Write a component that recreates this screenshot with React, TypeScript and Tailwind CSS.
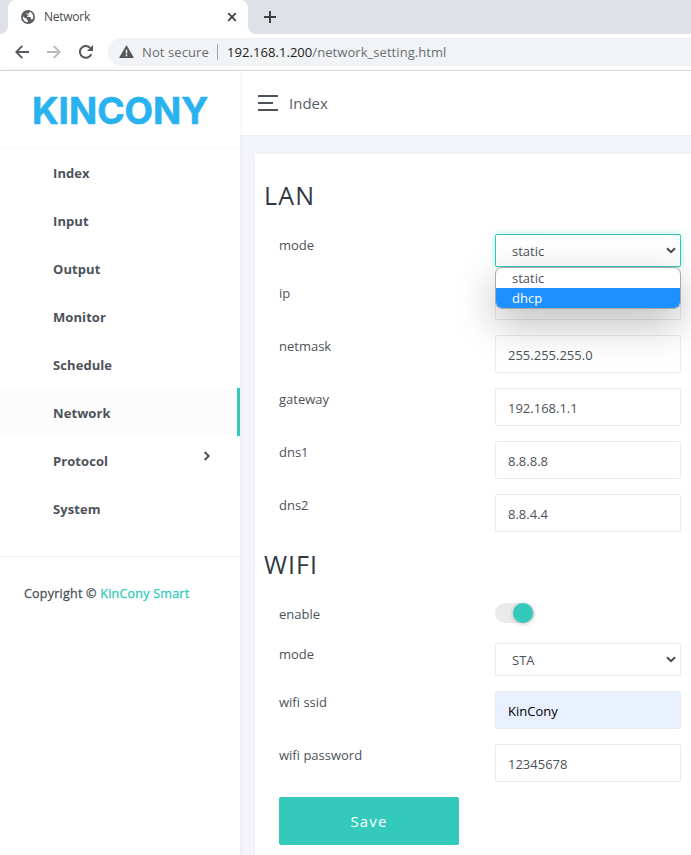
import React from 'react';

const NAV = ['Index', 'Input', 'Output', 'Monitor', 'Schedule', 'Network', 'Protocol', 'System'];

function Globe() {
  return (
    <svg className="h-[14px] w-[14px]" viewBox="0 0 14 14">
      <circle cx="7" cy="7" r="7" fill="#5a5e63" />
      <path d="M2 6.3 L4.1 8.2 H5.7 V9.6 L6.8 10.4 V12.3 C3.8 12.2 1.3 9.7 2 6.3Z" fill="#fff" />
      <path d="M8.3 1.8 C10.6 2.2 12.3 4.3 12.3 6.7 L11.9 8.7 L10.8 9.5 L9.6 8.4 V7.1 H6.3 V5.7 H7.6 V4.4 H5.4 V3.4 H8.3Z" fill="#fff" />
    </svg>
  );
}

function Chevron() {
  return (
    <svg className="h-[7px] w-[10px] shrink-0" viewBox="0 0 10 7" fill="none" stroke="#4b4b4b" strokeWidth="2">
      <path d="M1 1.2 L5 5.2 L9 1.2" />
    </svg>
  );
}

function BrowserBar() {
  return (
    <div className="h-[71px] shrink-0 border-b border-[#d5d7da] bg-white">
      <div className="flex h-[34px] bg-white">
        <div className="w-2 rounded-br-lg bg-[#dee1e6]" />
        <div className="bg-[#dee1e6]">
          <div className="flex h-[34px] w-[240px] items-center rounded-t-lg bg-white pr-[11px] pl-[13px]">
            <Globe />
            <span className="ml-[9px] flex-1 text-[12px] tracking-[-0.25px] text-[#45494d]">Network</span>
            <svg className="h-[10px] w-[10px]" viewBox="0 0 10 10" stroke="#3c4043" strokeWidth="1.7">
              <path d="M1.2 1.2 L8.8 8.8 M8.8 1.2 L1.2 8.8" />
            </svg>
          </div>
        </div>
        <div className="flex flex-1 items-center rounded-bl-lg bg-[#dee1e6] pl-4">
          <svg className="h-3 w-3" viewBox="0 0 12 12" stroke="#3c4043" strokeWidth="2">
            <path d="M6 0 V12 M0 6 H12" />
          </svg>
        </div>
      </div>
      <div className="flex h-9 items-center pl-[15px]">
        <svg className="h-[14px] w-[14px]" viewBox="0 0 14 14" fill="none" stroke="#54585d" strokeWidth="1.8">
          <path d="M14 7 H1.5 M7.3 0.8 L1.2 7 L7.3 13.2" />
        </svg>
        <svg className="ml-[18px] h-[14px] w-[14px]" viewBox="0 0 14 14" fill="none" stroke="#b8babd" strokeWidth="1.8">
          <path d="M0 7 H12.5 M6.7 0.8 L12.8 7 L6.7 13.2" />
        </svg>
        <svg className="ml-[18px] h-[14px] w-[14px]" viewBox="0 0 14 14">
          <path d="M12.3 9.1 A5.9 5.9 0 1 1 11.3 3" fill="none" stroke="#54585d" strokeWidth="2" />
          <path d="M14 0 V6 H8Z" fill="#54585d" />
        </svg>
        <div className="ml-[15px] flex h-7 flex-1 items-center rounded-l-full bg-[#f1f3f4] pl-[11px]">
          <svg className="mb-px h-[13px] w-[15px]" viewBox="0 0 15 13">
            <path d="M7.5 0 L15 13 H0Z" fill="#54585d" />
            <path d="M7.5 4.7 V8.5 M7.5 9.5 V11.2" stroke="#fff" strokeWidth="1.5" />
          </svg>
          <span className="ml-2 w-[75px] pt-px text-[13px] tracking-[0.1px] whitespace-nowrap text-[#6a6e73]">Not secure</span>
          <div className="mr-[9px] h-4 w-px bg-[#a5a8ac]" />
          <span className="pt-px text-[13px] tracking-[0.06px] whitespace-nowrap text-[#6a6e73]">
            <span className="text-[#202124]">192.168.1.200</span>/network_setting.html
          </span>
        </div>
      </div>
    </div>
  );
}

function Sidebar() {
  return (
    <aside className="z-10 w-[240px] shrink-0 bg-white shadow-[0_0_5px_rgba(60,70,100,0.09)]">
      <div className="flex h-[77px] items-center pl-[32px]">
        <div className="mt-[2px] font-['Inter'] text-[37px] leading-none font-bold text-[#29b2f0] [-webkit-text-stroke:0.6px_#29b2f0]">KINCONY</div>
      </div>
      <nav className="h-[409px] border-b border-[#f4f5f6] text-[13px] font-bold text-[#4d5259] shadow-[inset_0_1px_0_#f8f8f9]">
        {NAV.map((name) => (
          <div
            key={name}
            className={
              name === 'Network'
                ? 'flex h-12 items-center justify-between border-r-[3px] border-[#33cabb] bg-[#fcfcfc] pl-[53px]'
                : 'flex h-12 items-center justify-between pl-[53px]'
            }
          >
            <span className="pt-[3px] tracking-[0.08px]">{name}</span>
            {name === 'Protocol' && (
              <svg className="mr-[29px] mb-[9px] h-[10px] w-[8px]" viewBox="0 0 8 10" fill="none" stroke="#4d5259" strokeWidth="1.9">
                <path d="M1.6 1 L5.7 5 L1.6 9" />
              </svg>
            )}
          </div>
        ))}
      </nav>
      <div className="mt-[27px] pl-6 text-[12.5px] leading-5 tracking-[0.24px] whitespace-nowrap text-[#4d5259] [-webkit-text-stroke:0.3px]">
        Copyright © <span className="text-[#33cabb]">KinCony Smart</span>
      </div>
    </aside>
  );
}

function Row({ label, children }: { label: string; children: React.ReactNode }) {
  return (
    <div className="mb-[15px] flex items-start">
      <div className="w-[216px] pt-px leading-[20px]">{label}</div>
      {children}
    </div>
  );
}

function Field({ value, filled }: { value: string; filled?: boolean }) {
  return (
    <div
      className={
        filled
          ? 'flex h-[38px] w-[186px] items-center rounded-[2px] border border-[#ebebeb] bg-[#e8f0fe] pt-[3px] pl-3 text-black'
          : 'flex h-[38px] w-[186px] items-center rounded-[2px] border border-[#ebebeb] pt-[3px] pl-3'
      }
    >
      {value}
    </div>
  );
}

function Select({ value, open }: { value: string; open?: boolean }) {
  return (
    <div
      className={
        open
          ? 'relative flex h-[33px] w-[186px] items-center justify-between rounded-[2px] border border-[#33cabb] pr-1 pl-4 shadow-[0_0_6px_rgba(51,202,187,0.4)]'
          : 'flex h-[33px] w-[186px] items-center justify-between rounded-[2px] border border-[#ebebeb] pr-1 pl-4'
      }
    >
      <span className="pt-[2px]">{value}</span>
      <Chevron />
      {open && (
        <div className="absolute top-[32px] -left-px z-20 w-[186px] overflow-hidden rounded-[7px] border border-[#a9a9a9] bg-white leading-5 shadow-[0_14px_40px_rgba(0,0,0,0.28)]">
          <div className="h-5 pl-4">static</div>
          <div className="h-5 bg-[#1e90ff] pl-4 text-white">dhcp</div>
        </div>
      )}
    </div>
  );
}

export default function App() {
  return (
    <div className="flex h-[855px] w-[691px] flex-col overflow-hidden bg-white font-['Open_Sans','Noto_Sans',sans-serif] text-[13px] text-[#4d5259]">
      <BrowserBar />
      <div className="flex min-h-0 flex-1">
        <Sidebar />
        <main className="flex-1 bg-[#f4f5fa]">
          <header className="flex h-[65px] items-center border-b border-[#f0f1f4] bg-white pl-[18px]">
            <div className="flex w-5 flex-col gap-[5px]">
              <div className="h-[2px] bg-[#4d5259]" />
              <div className="h-[2px] w-[15px] bg-[#4d5259]" />
              <div className="h-[2px] bg-[#4d5259]" />
            </div>
            <span className="ml-[11px] pt-px text-[15px] text-[#5a5e65]">Index</span>
          </header>
          <section className="mt-[18px] ml-[15px] h-[720px] bg-white pt-[21px] pl-6 shadow-[0_0_3px_rgba(0,0,0,0.04)]">
            <h2 className="mb-[19px] -ml-[15px] text-[25px] leading-10 tracking-[1.2px] text-[#313944]">LAN</h2>
            <Row label="mode"><Select value="static" open /></Row>
            <Row label="ip"><Field value="" /></Row>
            <Row label="netmask"><Field value="255.255.255.0" /></Row>
            <Row label="gateway"><Field value="192.168.1.1" /></Row>
            <Row label="dns1"><Field value="8.8.8.8" /></Row>
            <Row label="dns2"><Field value="8.8.4.4" /></Row>
            <h2 className="mb-[22px] -ml-[15px] text-[25px] leading-[34px] tracking-[1px] text-[#313944]">WIFI</h2>
            <div className="mb-[19px] flex h-[21px] items-start">
              <div className="w-[216px] pt-px leading-5">enable</div>
              <div className="flex h-5 w-10 justify-end rounded-full bg-[#ebebeb] pr-[2px]">
                <div className="h-5 w-5 rounded-full bg-[#33cabb] shadow-[0_1px_4px_rgba(0,0,0,0.25)]" />
              </div>
            </div>
            <Row label="mode"><Select value="STA" /></Row>
            <Row label="wifi ssid"><Field value="KinCony" filled /></Row>
            <Row label="wifi password"><Field value="12345678" /></Row>
            <button className="h-12 w-[180px] rounded-[2px] bg-[#33cabb] text-[15px] tracking-[1.1px] text-white">Save</button>
          </section>
        </main>
      </div>
    </div>
  );
}
